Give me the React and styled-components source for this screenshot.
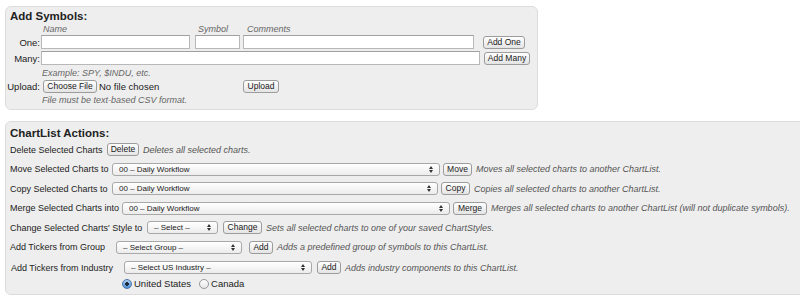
import styled, { createGlobalStyle } from "styled-components";

const GlobalStyle = createGlobalStyle`
  html, body {
    margin: 0;
    padding: 0;
    background: #fff;
    overflow: hidden;
  }
  body {
    font-family: "Liberation Sans", Arial, sans-serif;
    font-size: 9px;
    color: #222;
  }
`;

const Page = styled.div`
  width: 800px;
  height: 308px;
  padding: 6px 0 0 5px;
  box-sizing: border-box;
  overflow: hidden;
  display: flex;
  flex-direction: column;
  gap: 11px;
`;

const Panel = styled.div`
  width: ${(p) => p.$w}px;
  flex-shrink: 0;
  box-sizing: border-box;
  background: #eeeeee;
  border: 1px solid #dcdcdc;
  border-radius: 6px;
  padding: ${(p) => p.$pad};
  display: flex;
  flex-direction: column;
`;

const Title = styled.div`
  font-size: 11.5px;
  font-weight: bold;
  line-height: 13px;
  height: 13px;
  color: #222;
  padding-left: ${(p) => p.$indent || 0}px;
`;

const FormRow = styled.div`
  display: flex;
  align-items: center;
  height: ${(p) => p.$h}px;
  margin-top: ${(p) => p.$mt || 0}px;
`;

const RowLabel = styled.div`
  width: 35px;
  flex-shrink: 0;
  box-sizing: border-box;
  padding-right: 1px;
  text-align: right;
  font-size: 9.5px;
`;

const HeadCell = styled.div`
  width: ${(p) => p.$w}px;
  flex-shrink: 0;
  padding-left: 1px;
  font-style: italic;
  color: #666;
  font-size: 9px;
`;

const Hint = styled.div`
  height: 12px;
  line-height: 12px;
  margin-top: ${(p) => p.$mt || 0}px;
  padding-left: 36px;
  font-style: italic;
  color: #666;
  font-size: 9px;
`;

const TextInput = styled.input`
  width: ${(p) => p.$w}px;
  height: 14px;
  margin: 0 ${(p) => p.$mr || 0}px 0 0;
  padding: 0 2px;
  box-sizing: border-box;
  border: 1px solid #b8b8b8;
  border-top-color: #a0a0a0;
  background: #fff;
  font: 9px "Liberation Sans", Arial, sans-serif;
  outline: none;
`;

const Btn = styled.button`
  width: ${(p) => p.$w}px;
  height: 13px;
  margin: 0 0 0 ${(p) => p.$ml || 0}px;
  padding: 0;
  flex-shrink: 0;
  box-sizing: border-box;
  border: 1px solid #9c9c9c;
  border-radius: 3px;
  background: linear-gradient(#ffffff, #e4e4e4);
  font: 8.5px "Liberation Sans", Arial, sans-serif;
  line-height: 11px;
  color: #1a1a1a;
  text-align: center;
`;

const FileBox = styled.div`
  width: 200px;
  margin-left: 2px;
  display: flex;
  align-items: center;
  gap: 2px;
  font-size: 9.5px;
`;

const ActionRow = styled.div`
  display: flex;
  align-items: center;
  height: ${(p) => p.$h || 19.5}px;
  padding-left: 4px;
`;

const ActionLabel = styled.div`
  width: ${(p) => p.$w}px;
  flex-shrink: 0;
  box-sizing: border-box;
  padding-left: ${(p) => p.$pl || 0}px;
  font-size: 9px;
  white-space: nowrap;
`;

const Desc = styled.span`
  margin-left: 4px;
  font-style: italic;
  color: #555;
  font-size: 9px;
  white-space: nowrap;
`;

const SelectWrap = styled.div`
  position: relative;
  width: ${(p) => p.$w}px;
  height: 13px;
  flex-shrink: 0;
`;

const Select = styled.select`
  appearance: none;
  -webkit-appearance: none;
  width: 100%;
  height: 13px;
  margin: 0;
  padding: 0 0 0 6px;
  box-sizing: border-box;
  border: 1px solid #a8a8a8;
  border-radius: 3px;
  background: linear-gradient(#ffffff, #ececec);
  font: 8px "Liberation Sans", Arial, sans-serif;
  line-height: 11px;
  color: #1a1a1a;
  outline: none;
`;

const Arrows = styled.svg`
  position: absolute;
  right: 7px;
  top: 3px;
  pointer-events: none;
`;

const RadioRow = styled.div`
  display: flex;
  align-items: center;
  height: 11px;
  padding-left: 116px;
  font-size: 9.5px;
`;

const RadioDot = styled.span`
  width: 10px;
  height: 10px;
  box-sizing: border-box;
  border-radius: 50%;
  border: 1px solid ${(p) => (p.$on ? "#4a73a8" : "#999")};
  background: ${(p) =>
    p.$on
      ? "radial-gradient(circle, #1c2a3a 0 1.6px, transparent 2px), linear-gradient(#a9cdf2, #4d8fd6)"
      : "linear-gradient(#ffffff, #e6e6e6)"};
  margin: 0 2px 0 ${(p) => p.$ml || 0}px;
  flex-shrink: 0;
`;

function DropDown({ w, value }) {
  return (
    <SelectWrap $w={w}>
      <Select defaultValue={value}>
        <option>{value}</option>
      </Select>
      <Arrows width="4" height="7" viewBox="0 0 4 7">
        <path d="M0 3 L2 0 L4 3 Z M0 4 L2 7 L4 4 Z" fill="#333" />
      </Arrows>
    </SelectWrap>
  );
}

const workflow = "00 – Daily Workflow";

export default function App() {
  return (
    <>
      <GlobalStyle />
      <Page>
        <Panel $w={533} $pad="3px 0 3px 0">
          <Title $indent={4}>Add Symbols:</Title>
          <FormRow $h={11}>
            <HeadCell $w={35} />
            <HeadCell $w={154}>Name</HeadCell>
            <HeadCell $w={48}>Symbol</HeadCell>
            <HeadCell $w={200}>Comments</HeadCell>
          </FormRow>
          <FormRow $h={14} $mt={1}>
            <RowLabel>One:</RowLabel>
            <TextInput $w={149} $mr={5} />
            <TextInput $w={45} $mr={3} />
            <TextInput $w={231} $mr={9} />
            <Btn $w={42}>Add One</Btn>
          </FormRow>
          <FormRow $h={14} $mt={2}>
            <RowLabel>Many:</RowLabel>
            <TextInput $w={439} $mr={4} />
            <Btn $w={46}>Add Many</Btn>
          </FormRow>
          <Hint $mt={2}>Example: SPY, $INDU, etc.</Hint>
          <FormRow $h={15}>
            <RowLabel>Upload:</RowLabel>
            <FileBox>
              <Btn $w={54}>Choose File</Btn>
              <span>No file chosen</span>
            </FileBox>
            <Btn $w={36}>Upload</Btn>
          </FormRow>
          <Hint>File must be text-based CSV format.</Hint>
        </Panel>

        <Panel $w={820} $pad="5px 0 5px 0">
          <Title $indent={4}>ChartList Actions:</Title>
          <ActionRow>
            <ActionLabel $w={97}>Delete Selected Charts</ActionLabel>
            <Btn $w={32}>Delete</Btn>
            <Desc>Deletes all selected charts.</Desc>
          </ActionRow>
          <ActionRow>
            <ActionLabel $w={102}>Move Selected Charts to</ActionLabel>
            <DropDown w={328} value={workflow} />
            <Btn $w={29} $ml={3}>Move</Btn>
            <Desc>Moves all selected charts to another ChartList.</Desc>
          </ActionRow>
          <ActionRow>
            <ActionLabel $w={102}>Copy Selected Charts to</ActionLabel>
            <DropDown w={326} value={workflow} />
            <Btn $w={29} $ml={3}>Copy</Btn>
            <Desc>Copies all selected charts to another ChartList.</Desc>
          </ActionRow>
          <ActionRow>
            <ActionLabel $w={112}>Merge Selected Charts into</ActionLabel>
            <DropDown w={328} value={workflow} />
            <Btn $w={34} $ml={3}>Merge</Btn>
            <Desc>
              Merges all selected charts to another ChartList (will not duplicate symbols).
            </Desc>
          </ActionRow>
          <ActionRow>
            <ActionLabel $w={137}>Change Selected Charts' Style to</ActionLabel>
            <DropDown w={71} value="– Select –" />
            <Btn $w={39} $ml={5}>Change</Btn>
            <Desc>Sets all selected charts to one of your saved ChartStyles.</Desc>
          </ActionRow>
          <ActionRow>
            <ActionLabel $w={106}>Add Tickers from Group</ActionLabel>
            <DropDown w={126} value="– Select Group –" />
            <Btn $w={24} $ml={7}>Add</Btn>
            <Desc>Adds a predefined group of symbols to this ChartList.</Desc>
          </ActionRow>
          <ActionRow $h={21}>
            <ActionLabel $w={114} $pl={1}>Add Tickers from Industry</ActionLabel>
            <DropDown w={188} value="– Select US Industry –" />
            <Btn $w={24} $ml={5}>Add</Btn>
            <Desc>Adds industry components to this ChartList.</Desc>
          </ActionRow>
          <RadioRow>
            <RadioDot $on />
            <span>United States</span>
            <RadioDot $ml={8} />
            <span>Canada</span>
          </RadioRow>
        </Panel>
      </Page>
    </>
  );
}
